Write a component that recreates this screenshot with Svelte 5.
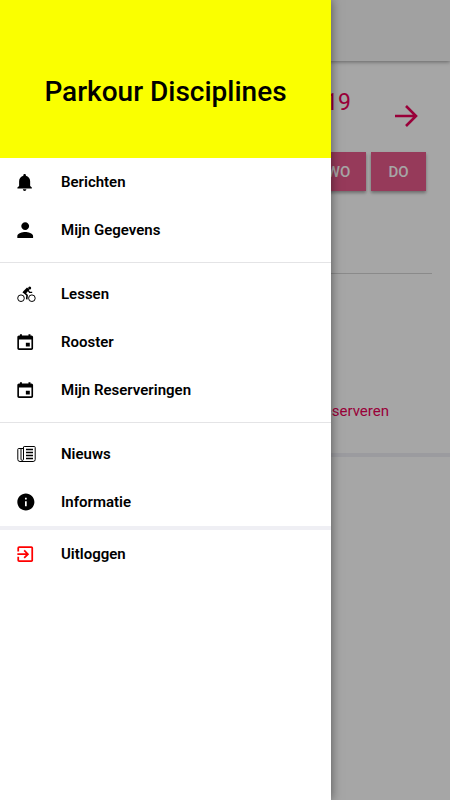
<script>
  const bell = 'M256 464c22.779 0 41.411-18.719 41.411-41.6h-82.823c0 22.881 18.633 41.6 41.412 41.6zm134.589-124.8V224.8c0-63.44-44.516-117.518-103.53-131.041V79.2c0-17.682-13.457-31.2-31.059-31.2s-31.059 13.518-31.059 31.2v14.559c-59.015 13.523-103.53 67.601-103.53 131.041v114.4L80 380.8v20.8h352v-20.8l-41.411-41.6z';
  const person = 'M256 256c52.805 0 96-43.201 96-96s-43.195-96-96-96-96 43.201-96 96 43.195 96 96 96zm0 48c-63.598 0-192 32.402-192 96v48h384v-48c0-63.598-128.402-96-192-96z';
  const calendar = 'M368 272h-96v96h96v-96zM336 64v32H176V64h-48v32h-24c-22 0-40 18-40 40v272c0 22 18 40 40 40h304c22 0 40-18 40-40V136c0-22-18-40-40-40h-24V64h-48zm72 344H104V196h304v212z';
  const info = 'M256 48C141.2 48 48 141.2 48 256s93.2 208 208 208 208-93.2 208-208S370.8 48 256 48zm21 312h-42V235h42v125zm0-166h-42v-42h42v42z';
  const exit = 'M10.09 15.59L11.5 17l5-5-5-5-1.41 1.41L12.67 11H3v2h9.67l-2.58 2.59zM19 3H5a2 2 0 0 0-2 2v4h2V5h14v14H5v-4H3v4a2 2 0 0 0 2 2h14c1.1 0 2-.9 2-2V5c0-1.1-.9-2-2-2z';

  const groups = [
    [
      { label: 'Berichten', path: bell, box: '70 0 512 512' },
      { label: 'Mijn Gegevens', path: person, box: '56 12 512 512' },
    ],
    [
      { label: 'Lessen', kind: 'bike', box: '0 0 21 21' },
      { label: 'Rooster', path: calendar, box: '56 12 512 512' },
      { label: 'Mijn Reserveringen', path: calendar, box: '56 12 512 512' },
    ],
    [
      { label: 'Nieuws', kind: 'news', box: '0 0 21 21' },
      { label: 'Informatie', path: info, box: '40 12 512 512' },
    ],
    [{ label: 'Uitloggen', path: exit, box: '2.6 0.4 24 24', red: true }],
  ];
</script>

<div class="app">
  <div class="page">
    <header class="toolbar"></header>
    <main>
      <div class="date">
        <span class="year">2019</span>
        <button class="next" aria-label="Volgende">
          <svg viewBox="0 0 24 24" width="24" height="24" fill="none" stroke="currentColor" stroke-width="2.6">
            <path d="M1 12h21M12 2l10 10-10 10" />
          </svg>
        </button>
      </div>
      <div class="days">
        <button class="day">WO</button>
        <button class="day">DO</button>
      </div>
      <div class="lesson">
        <a class="reserve" href="#reserveren">Reserveren</a>
      </div>
    </main>
  </div>

  <div class="backdrop"></div>

  <aside class="drawer">
    <div class="brand"><h1>Parkour Disciplines</h1></div>
    <nav>
      {#each groups as items}
        <ul>
          {#each items as item}
            <li>
              <a href="#menu">
                <svg class:red={item.red} viewBox={item.box} width="21" height="21" fill="currentColor" aria-hidden="true">
                  {#if item.kind === 'bike'}
                    <g fill="none" stroke="currentColor">
                      <circle cx="4" cy="14.2" r="3.3" />
                      <circle cx="14.9" cy="14.2" r="3.3" />
                      <path d="M7 8.4l3.1 2.8-.4 4.2" stroke-width="1.6" />
                      <path d="M11 6.2l1.6 2.2h2.6" stroke-width="1.4" />
                    </g>
                    <path d="M10 3.6l2.4 1.8-3.4 4.2-3-.6c-.6-.5-.4-1.1.1-1.6z" />
                    <circle cx="12.7" cy="4" r="1.5" />
                  {:else if item.kind === 'news'}
                    <g fill="none" stroke="currentColor">
                      <path d="M6.5 3.2Q6.5 2.5 7.2 2.5H17.3Q18.2 2.5 18.2 3.4V15.5Q18.2 17.5 16.1 17.5H3Q.8 17.5.8 15.4V5.3Q.8 4.5 1.6 4.5H6" />
                      <path d="M6.5 3v12.2q0 1.2-1.2 1.2t-1.3-1.2V4.6" />
                      <path d="M9 5.5h7M9 8.5h7M9 11.5h7M9 14.5h7" stroke-width="1.4" />
                    </g>
                  {:else}
                    <path d={item.path} />
                  {/if}
                </svg>
                <span>{item.label}</span>
              </a>
            </li>
          {/each}
        </ul>
      {/each}
    </nav>
  </aside>
</div>

<style>
  :global(body) {
    margin: 0;
    font-family: Roboto, "Liberation Sans", sans-serif;
  }
  .app {
    position: relative;
    min-height: 100vh;
    overflow: hidden;
    background: #fff;
  }
  button {
    border: 0;
    padding: 0;
    font-family: inherit;
  }
  a {
    text-decoration: none;
  }
  .toolbar {
    height: 61px;
    background: #f7f7f7;
    box-shadow: 0 1px 4px rgba(0, 0, 0, 0.4);
  }
  .date {
    display: flex;
    justify-content: flex-end;
    align-items: flex-start;
    gap: 43px;
    padding: 28px 32px 0 0;
    height: 63px;
    color: #ec0058;
  }
  .year {
    font-size: 23px;
    line-height: 28px;
  }
  .next {
    display: flex;
    margin-top: 15px;
    background: none;
    color: inherit;
  }
  .days {
    display: flex;
    justify-content: flex-end;
    gap: 5px;
    margin-right: 18px;
    padding: 0 6px 82px 0;
    border-bottom: 1px solid #d4d4d4;
  }
  .day {
    width: 55px;
    height: 39px;
    background: #e65688;
    color: #fff;
    opacity: 0.98;
    font-size: 15px;
    font-weight: 500;
    box-shadow: 0 2px 3px rgba(0, 0, 0, 0.35);
  }
  .lesson {
    display: flex;
    justify-content: flex-end;
    padding: 127px 61px 32px 0;
    border-bottom: 4px solid #efeff4;
  }
  .reserve {
    color: #ec0058;
    font-size: 15px;
    line-height: 20px;
  }
  .backdrop {
    position: absolute;
    inset: 0;
    background: rgba(0, 0, 0, 0.35);
  }
  .drawer {
    position: absolute;
    inset: 0 auto 0 0;
    width: calc(100% - 119px);
    background: #fff;
    box-shadow: 0 0 10px rgba(0, 0, 0, 0.5);
  }
  .brand {
    box-sizing: border-box;
    height: 158px;
    padding-top: 75px;
    background: #faff00;
  }
  h1 {
    margin: 0;
    font-size: 28px;
    line-height: 34px;
    font-weight: 500;
    text-align: center;
  }
  ul {
    margin: 0;
    padding: 0 0 8px;
    list-style: none;
  }
  ul + ul {
    padding-top: 7px;
    border-top: 1px solid #e4e4e6;
  }
  ul:nth-last-child(2) {
    padding-bottom: 0;
  }
  ul:last-child {
    padding-top: 0;
    border-top: 4px solid #efeff4;
  }
  li a {
    display: flex;
    align-items: center;
    gap: 23px;
    height: 48px;
    padding-left: 17px;
    color: #000;
    font-size: 15px;
    line-height: 20px;
    font-weight: 600;
  }
  .red {
    color: #f00;
  }
</style>
